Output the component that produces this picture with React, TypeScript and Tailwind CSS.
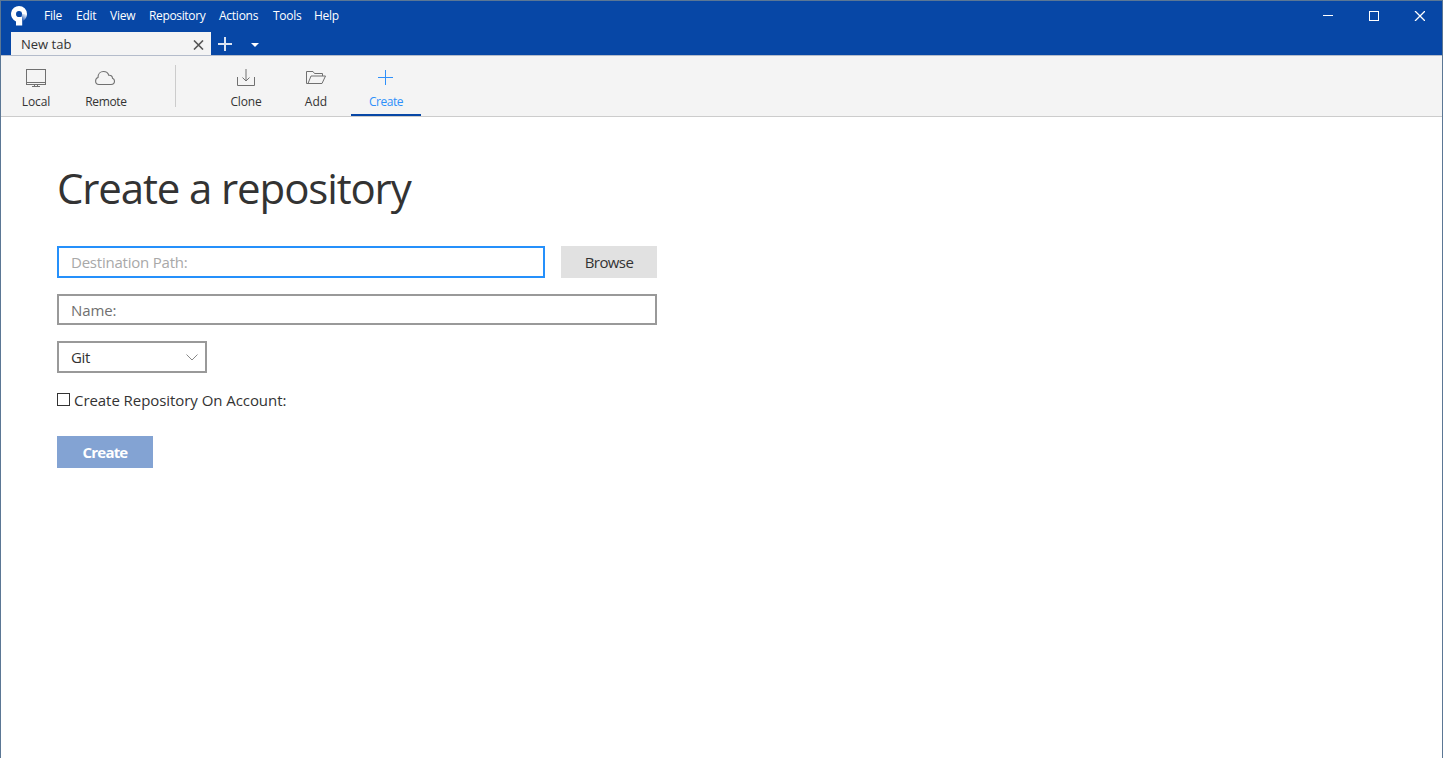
import React from "react";

const menus = [
  { label: "File", cls: "w-[32px]" },
  { label: "Edit", cls: "w-[34px]" },
  { label: "View", cls: "w-[39px]" },
  { label: "Repository", cls: "w-[70px] tracking-[-0.35px]" },
  { label: "Actions", cls: "w-[54px]" },
  { label: "Tools", cls: "w-[41px]" },
  { label: "Help", cls: "w-[40px]" },
];

function Logo() {
  return (
    <svg width="18" height="20" viewBox="0 0 18 20">
      <defs>
        <linearGradient id="fade" gradientUnits="userSpaceOnUse" x1="15" y1="8" x2="11.5" y2="13.5">
          <stop offset="0" stopColor="#fff" />
          <stop offset="1" stopColor="#3f6dba" />
        </linearGradient>
      </defs>
      <path fillRule="evenodd" fill="#fff" d="M8 0a8 8 0 0 1 8 8l-5 .5A3 3 0 1 0 8 11h3.200v8.500H5V15.400A8 8 0 0 1 8 0z" />
      <path d="M11 8 16 8A8 8 0 0 1 11.200 15.300V11H9.500A3 3 0 0 0 11 8z" fill="url(#fade)" />
    </svg>
  );
}

function Tool({ label, active, children, cls }: { label: string; active?: boolean; children: React.ReactNode; cls: string }) {
  return (
    <button className={`flex h-[60px] w-[70px] shrink-0 flex-col items-center border-b-2 pt-[12px] ${active ? "border-[#0747a6] text-[#2e90fa]" : "border-transparent text-[#333]"}`}>
      <svg width="22" height="22" viewBox="0 0 22 22" fill="none" stroke={active ? "#2e90fa" : "#707070"} strokeWidth="1">
        {children}
      </svg>
      <span className={`mt-[4px] text-[12px] leading-[16px] whitespace-nowrap ${cls}`}>{label}</span>
    </button>
  );
}

export default function App() {
  return (
    <div className="flex h-[758px] w-[1443px] flex-col overflow-hidden border border-b-0 border-[#5b7795] bg-white font-['Open_Sans','Noto_Sans',sans-serif] text-[#333]">
      <header className="flex h-[54px] shrink-0 flex-col bg-[#0747a6] text-white">
        <div className="flex h-[30px] items-center">
          <div className="ml-[10px] flex w-[33px]"><Logo /></div>
          {menus.map((m) => (
            <span key={m.label} className={`${m.cls} text-[12px] leading-[16px] tracking-[-0.25px] whitespace-nowrap`}>{m.label}</span>
          ))}
          <div className="ml-auto flex items-center pr-[17px]">
            <svg width="102" height="10" viewBox="0 0 102 10" fill="none" stroke="#fff">
              <path d="M0 4.5h10M46.5.5h9v9h-9z" shapeRendering="crispEdges" />
              <path d="m92 0 10 10M102 0 92 10" strokeWidth="1.3" />
            </svg>
          </div>
        </div>
        <div className="flex h-[24px] items-start pt-px">
          <div className="ml-[10px] flex h-[23px] w-[200px] shrink-0 items-start justify-between bg-[#f4f4f4] pr-[7px] pl-[10px] text-[#333]">
            <span className="mt-[3px] text-[13px] leading-[18px]">New tab</span>
            <svg className="mt-[8px]" width="11" height="10" viewBox="0 0 11 10" stroke="#555" strokeWidth="1.6"><path d="m1 .5 9 9M10 .5 1 9.500" /></svg>
          </div>
          <svg className="mt-[5px] ml-[7px]" width="14" height="14" viewBox="0 0 14 14" stroke="#dbe4f3" strokeWidth="2"><path d="M0 7h14M7 0v14" /></svg>
          <svg className="mt-[11px] ml-[19px]" width="8" height="4" viewBox="0 0 8 4" fill="#fff"><path d="M0 0h8L4 4z" /></svg>
        </div>
      </header>
      <nav className="flex h-[62px] shrink-0 border-t border-b border-t-[#b4bccb] border-b-[#ccc] bg-[#f4f4f4]">
        <Tool label="Local" cls="tracking-[-0.1px]">
          <g shapeRendering="crispEdges"><path d="M1.5 1.5h19v15h-19zM1.5 14.5h19M9.500 16v2M12.500 16v2M7 18.500h8" /></g>
        </Tool>
        <Tool label="Remote" cls="tracking-[-0.35px]">
          <path strokeWidth="1.1" d="M4 16.500C1.800 16.500.6 14.900.6 13c0-1.800 1-3 2.400-3.500C3 5.800 5.400 3.500 8.500 3.500c2.600 0 4.500 1.300 5.300 3.800 2.400-.3 3.700 1.200 3.700 3 1.300.5 2 1.500 2 2.800 0 2-1.500 3.400-3.500 3.400z" />
        </Tool>
        <div className="mt-[9px] mr-[35px] ml-[34px] h-[42px] w-px bg-[#ccc]" />
        <Tool label="Clone" cls="tracking-[-0.15px]">
          <path d="M2.500 9v8.500h17V9M11 1v12M7.500 9.500 11 13l3.500-3.500" />
        </Tool>
        <Tool label="Add" cls="">
          <path d="M3 15.500H1.500v-12h6.500l1.500 2h8V8M3 15.500h14L20.500 8H6L3 15.500" />
        </Tool>
        <Tool label="Create" active cls="tracking-[-0.45px]">
          <path d="M3 9.500h15M10.500 2v15" shapeRendering="crispEdges" />
        </Tool>
      </nav>
      <main className="flex flex-col items-start pl-[56px]">
        <h1 className="mt-[41px] h-[60px] text-[42px] leading-[60px] tracking-[-1.13px] whitespace-nowrap">Create a repository</h1>
        <div className="mt-[28px] flex gap-[16px]">
          <input className="h-[32px] w-[488px] border-2 border-[#2590fb] px-[12px] text-[15px] tracking-[-0.22px] outline-none placeholder:text-[#a8a8a8]" placeholder="Destination Path:" />
          <button className="h-[32px] w-[96px] bg-[#e1e1e1] text-[15px] tracking-[-0.6px]">Browse</button>
        </div>
        <input className="mt-[16px] h-[31px] w-[600px] border-2 border-[#999] px-[12px] text-[15px] tracking-[-0.1px] outline-none placeholder:text-[#707070]" placeholder="Name:" />
        <button className="mt-[16px] flex h-[32px] w-[150px] items-center justify-between border-2 border-[#999] pr-[7px] pl-[12px] text-[15px]">
          <span className="tracking-[-0.3px]">Git</span>
          <svg width="12" height="7" viewBox="0 0 12 7" fill="none" stroke="#888"><path d="m.5.5 5.500 5.500L11.500.5" /></svg>
        </button>
        <label className="mt-[15px] flex h-[24px] items-center gap-[4px] text-[15px] leading-[24px] tracking-[-0.06px]">
          <span className="mb-[2px] size-[13px] border border-[#333]" />
          <span>Create Repository On Account:</span>
        </label>
        <button className="mt-[24px] h-[32px] w-[96px] bg-[#83a3d3] text-[15px] font-bold tracking-[-0.8px] text-white">Create</button>
      </main>
    </div>
  );
}
